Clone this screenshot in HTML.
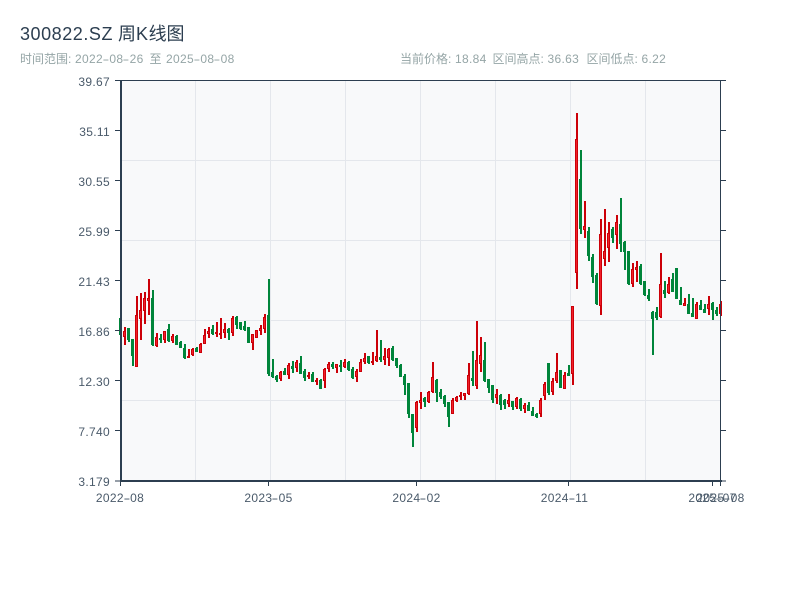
<!DOCTYPE html>
<html><head><meta charset="utf-8">
<style>
html,body{margin:0;padding:0;background:#fff}
body{width:800px;height:600px;overflow:hidden;position:relative;font-family:"Liberation Sans","Noto Sans CJK SC",sans-serif}
svg{position:absolute;left:0;top:0}
.t{position:absolute;white-space:nowrap}
.s{font-size:12px;line-height:15px;color:#95a5a6;top:52px}
.n{letter-spacing:.33px}
.h{display:inline-block;width:6.3px;text-align:center;transform:scaleX(1.7)}
.y,.x{position:absolute;white-space:nowrap;font-size:12px;line-height:14px;color:#4a5a6a;letter-spacing:.33px}
.y{width:60px;left:50px;text-align:right}
.x{width:70px;text-align:center;top:491px}
</style></head><body>
<div class="t" style="left:20px;top:24px;font-size:18px;line-height:21px;color:#2c3e50"><span style="letter-spacing:.55px">300822.SZ</span> 周<span style="letter-spacing:.5px">K</span>线图</div>
<div class="t s" style="left:20px">时间范围:</div>
<div class="t s n" style="left:75px">2022<span class="h">-</span>08<span class="h">-</span>26</div>
<div class="t s" style="left:149.5px">至</div>
<div class="t s n" style="left:166px">2025<span class="h">-</span>08<span class="h">-</span>08</div>
<div class="t s" style="left:400px">当前价格:</div>
<div class="t s n" style="left:455px">18.84</div>
<div class="t s" style="left:492.5px">区间高点:</div>
<div class="t s n" style="left:547.5px">36.63</div>
<div class="t s" style="left:586.5px">区间低点:</div>
<div class="t s n" style="left:641.5px">6.22</div>
<svg width="800" height="600" viewBox="0 0 800 600" xmlns="http://www.w3.org/2000/svg">
<rect x="120" y="80" width="600" height="400" fill="#f8f9fa"/>
<path d="M195.5 80V480M270.5 80V480M345.5 80V480M420.5 80V480M495.5 80V480M570.5 80V480M645.5 80V480M120 160.5H720M120 240.5H720M120 320.5H720M120 400.5H720" stroke="#e4e7ec" stroke-width="1" fill="none"/>
<g id="bars" shape-rendering="crispEdges"></g>
<path d="M115 80.5H726M115 481H726" stroke="#2c3e50" stroke-width="1" fill="none"/>
<path d="M120 481H722" stroke="#2c3e50" stroke-width="2" fill="none"/>
<path d="M121 80V482" stroke="#2c3e50" stroke-width="2" fill="none"/>
<path d="M720.5 80V482" stroke="#2c3e50" stroke-width="1" fill="none"/>
<path d="M115 130.5H120M115 180.5H120M115 230.5H120M115 280.5H120M115 330.5H120M115 380.5H120M115 430.5H120M720 130.5H726M720 180.5H726M720 230.5H726M720 280.5H726M720 330.5H726M720 380.5H726M720 430.5H726M120.5 481V486M268.5 481V486M416.5 481V486M568.5 481V486M712.5 481V486M720.5 481V486" stroke="#2c3e50" stroke-width="1" fill="none"/>
</svg>
<div class="y" style="top:75px">39.67</div><div class="y" style="top:125px">35.11</div><div class="y" style="top:175px">30.55</div><div class="y" style="top:225px">25.99</div><div class="y" style="top:275px">21.43</div><div class="y" style="top:325px">16.86</div><div class="y" style="top:375px">12.30</div><div class="y" style="top:425px">7.740</div><div class="y" style="top:475px">3.179</div>
<div class="x" style="left:85px">2022<span class="h">-</span>08</div><div class="x" style="left:233.5px">2023<span class="h">-</span>05</div><div class="x" style="left:381.5px">2024<span class="h">-</span>02</div><div class="x" style="left:529.5px">2024<span class="h">-</span>11</div><div class="x" style="left:677.5px">2025<span class="h">-</span>07</div><div class="x" style="left:685.5px">2025<span class="h">-</span>08</div>
<script>
var d="g318,335,318,335 r327,345,331,337 g328,342,328,340 g339,366,339,356 r296,367,315,367 r293,340,310,319 r292,324,298,311 r279,315,298,301 g290,346,298,345 r333,347,337,346 g334,343,338,340 r331,343,331,340 g324,342,329,341 r334,343,336,341 g335,345,336,345 g341,348,342,348 g344,359,348,358 r349,358,356,358 r348,356,349,355 g347,352,348,352 r343,353,344,353 r329,344,335,344 r327,338,331,334 g325,335,329,334 r322,337,332,334 r318,339,333,335 r323,338,329,333 g328,340,329,333 r316,336,318,333 g316,329,317,325 g322,330,322,329 g321,331,326,330 g327,343,327,343 r334,350,334,343 r330,338,330,338 r325,335,328,331 r314,333,317,329 g279,376,315,374 g359,378,372,377 g375,382,376,380 r371,381,372,379 g368,375,371,375 r363,379,365,375 g361,373,366,369 r360,372,362,368 g356,374,363,374 g369,381,371,378 r372,379,375,377 g372,382,374,382 r378,385,380,382 g379,389,380,389 r368,388,369,381 r362,372,364,369 g362,369,364,367 r364,373,364,368 g360,372,365,367 r359,368,362,367 g361,371,362,370 g367,379,369,378 r369,382,371,377 r359,372,362,372 r353,364,358,362 g356,364,356,363 r352,365,361,363 r330,362,356,361 g340,362,357,360 r348,365,356,360 r348,366,349,358 g346,361,348,360 g358,368,358,366 g364,377,365,377 g374,395,376,385 g383,418,383,414 g414,447,414,433 r401,432,402,428 r392,409,400,403 g397,407,398,402 r391,403,392,402 r362,393,377,392 g379,402,380,393 g389,399,392,397 g395,407,396,404 g402,427,402,417 r398,414,400,414 r396,402,397,401 r392,400,395,397 r393,400,393,396 r363,395,375,394 g351,386,378,381 r321,389,360,386 r337,372,355,364 g342,382,360,381 g379,393,379,388 g385,403,385,400 r389,404,394,398 g394,410,395,405 g399,409,400,405 r394,407,400,404 g401,410,401,407 r397,409,398,407 g398,411,399,409 r403,413,405,409 g402,411,405,411 g407,416,411,416 g413,418,414,417 r398,417,400,414 r382,400,384,396 g363,395,363,393 r378,395,381,392 r353,383,372,381 g370,388,370,388 r372,389,375,389 g365,376,373,376 r306,385,306,374 r113,289,139,273 g150,234,179,229 r201,238,226,230 g227,261,231,256 g254,283,257,277 g273,305,275,304 r219,315,234,306 r209,266,251,259 r222,262,233,248 g227,243,229,238 r215,249,222,235 g198,252,224,244 g241,270,242,252 g251,285,251,284 r263,287,269,284 r261,282,267,270 g264,285,266,284 g281,296,281,295 g289,301,295,299 g311,355,312,319 g307,320,312,318 r253,318,284,317 g281,298,290,294 r277,294,284,293 g273,292,279,292 g268,299,268,299 g287,305,300,305 r298,306,303,306 g294,314,304,314 g298,317,313,317 r302,319,304,319 g300,310,305,310 g304,313,309,313 r296,315,304,309 g302,320,303,310 g307,316,310,314 r301,316,304,314".split(" ");
var h="";
d.forEach(function(s,i){
  var c=s[0],a=s.slice(1).split(","),x=120+4*i,col=c=="r"?"#cc0008":"#00853a";
  h+='<rect x="'+x+'" y="'+a[0]+'" width="2" height="'+(a[1]-a[0])+'" fill="'+col+'"/>';
  h+='<rect x="'+(x-1)+'" y="'+a[2]+'" width="3" height="'+Math.max(a[3]-a[2],1)+'" fill="'+col+'"/>';
  if(c=="r"&&a[3]-a[2]>2)h+='<rect x="'+x+'" y="'+(+a[2]+1)+'" width="1" height="'+(a[3]-a[2]-2)+'" fill="#f0202a"/>';
});
document.getElementById("bars").innerHTML=h;
</script>
</body></html>
